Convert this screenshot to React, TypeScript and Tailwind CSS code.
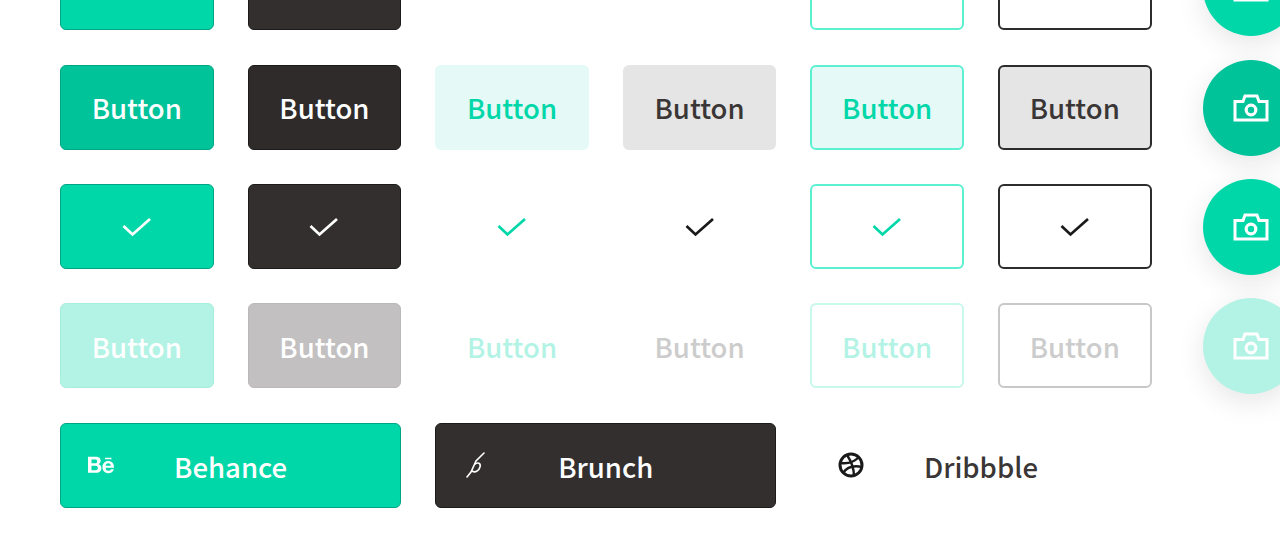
import React from "react";
import { FaBehance } from "react-icons/fa";

const P = "#00d7a9";

function Check({ color }: { color: string }) {
  return (
    <svg width="30" height="20" viewBox="0 0 30 20" fill="none">
      <path d="M1.5 9 L10.5 17.5 L28 2" stroke={color} strokeWidth="2.7" />
    </svg>
  );
}

function Camera() {
  return (
    <svg width="36" height="28" viewBox="0 0 36 28" fill="none" stroke="#ffffff">
      <path d="M2 26 V7.5 H10 L12 2 H24 L26 7.5 H34 V26 Z" strokeWidth="3" />
      <circle cx="18" cy="16" r="4.8" strokeWidth="3.2" />
    </svg>
  );
}

function Brunch() {
  return (
    <svg width="20" height="28" viewBox="0 0 20 28" fill="none" stroke="#ffffff" strokeWidth="1.6" strokeLinecap="round">
      <path d="M1 26 L5 21 L10 10 L18 2" />
      <path d="M9 13 C12 11 15 12 14 16 C13 20 9 22 6 20" />
    </svg>
  );
}

function Dribbble() {
  return (
    <svg width="26" height="26" viewBox="0 0 26 26" fill="none" stroke="#1a1a1a" strokeWidth="3">
      <circle cx="13" cy="13" r="11" />
      <path d="M9 3 C13 9 16 16 16 24" strokeWidth="2.4" />
      <path d="M3 11 C10 12 16 10 21 5" strokeWidth="2.4" />
      <path d="M5 21 C9 15 15 13 24 15" strokeWidth="2.4" />
    </svg>
  );
}

const v = {
  solid: "border bg-[#00d7a9] border-[#00a585] text-white",
  dark: "border bg-[#332f2f] border-[#1c1a1a] text-white",
  ghost: "border bg-white border-transparent text-[#00d7a9]",
  ghostDark: "border bg-white border-transparent text-[#3a3636]",
  outline: "border-2 bg-white border-[#5cf0d2] text-[#00d7a9]",
  outlineDark: "border-2 bg-white border-[#2e2b2b] text-[#3a3636]",
};

function Btn({ className, children }: { className: string; children: React.ReactNode }) {
  return (
    <div className={`flex h-[85px] items-center justify-center rounded-[6px] text-[27.5px] leading-none font-medium ${className}`}>
      {children}
    </div>
  );
}

function Label({ children }: { children: React.ReactNode }) {
  return <span className="pt-[2px]">{children}</span>;
}

function Fab({ className }: { className: string }) {
  return (
    <div className={`flex h-[96px] w-[96px] items-center justify-center rounded-full shadow-[0_8px_28px_rgba(0,0,0,0.1)] ${className}`}>
      <Camera />
    </div>
  );
}

function Wide({ className, icon, label }: { className: string; icon: React.ReactNode; label: string }) {
  return (
    <div className={`col-span-2 grid h-[85px] grid-cols-[1fr_auto_1fr] items-center rounded-[6px] text-[27.5px] leading-none font-medium ${className}`}>
      <div className="flex h-[30px] w-[80px] items-center justify-center">{icon}</div>
      <Label>{label}</Label>
      <span />
    </div>
  );
}

export default function App() {
  return (
    <div className="h-[546px] w-[1280px] overflow-hidden bg-white font-['Noto_Sans_CJK_JP','Noto_Sans',sans-serif]">
      <div className="mt-[-54.7px] flex">
        <div className="ml-[60px] grid grid-cols-[repeat(6,153.6px)] gap-x-[34px] gap-y-[34.4px]">
          <Btn className={v.solid}><Label>Button</Label></Btn>
          <Btn className={v.dark}><Label>Button</Label></Btn>
          <Btn className={v.ghost}><Label>Button</Label></Btn>
          <Btn className={v.ghostDark}><Label>Button</Label></Btn>
          <Btn className={v.outline}><Label>Button</Label></Btn>
          <Btn className={v.outlineDark}><Label>Button</Label></Btn>

          <Btn className="border border-[#00a585] bg-[#00c39a] text-white"><Label>Button</Label></Btn>
          <Btn className="border border-[#1c1a1a] bg-[#2f2b2b] text-white"><Label>Button</Label></Btn>
          <Btn className="border border-transparent bg-[#e5f9f6] text-[#00d7a9]"><Label>Button</Label></Btn>
          <Btn className="border border-transparent bg-[#e5e5e5] text-[#3a3636]"><Label>Button</Label></Btn>
          <Btn className="border-2 border-[#5cf0d2] bg-[#e5f9f6] text-[#00d7a9]"><Label>Button</Label></Btn>
          <Btn className="border-2 border-[#2e2b2b] bg-[#e5e5e5] text-[#3a3636]"><Label>Button</Label></Btn>

          <Btn className={v.solid}><Check color="#ffffff" /></Btn>
          <Btn className={v.dark}><Check color="#ffffff" /></Btn>
          <Btn className={v.ghost}><Check color={P} /></Btn>
          <Btn className={v.ghostDark}><Check color="#1a1a1a" /></Btn>
          <Btn className={v.outline}><Check color={P} /></Btn>
          <Btn className={v.outlineDark}><Check color="#1a1a1a" /></Btn>

          <Btn className="border border-[#a8eedd] bg-[#b3f3e5] text-white"><Label>Button</Label></Btn>
          <Btn className="border border-[#bbb8b8] bg-[#c2c0c0] text-white"><Label>Button</Label></Btn>
          <Btn className="border border-transparent bg-white text-[#b3f3e5]"><Label>Button</Label></Btn>
          <Btn className="border border-transparent bg-white text-[#cccccc]"><Label>Button</Label></Btn>
          <Btn className="border-2 border-[#c8f7ec] bg-white text-[#b3f3e5]"><Label>Button</Label></Btn>
          <Btn className="border-2 border-[#c8c8c8] bg-white text-[#cccccc]"><Label>Button</Label></Btn>

          <Wide className={v.solid} icon={<FaBehance size={26} color="#ffffff" />} label="Behance" />
          <Wide className={v.dark} icon={<Brunch />} label="Brunch" />
          <Wide className={v.ghostDark} icon={<Dribbble />} label="Dribbble" />
        </div>
        <div className="ml-[51px] -mt-[5px] flex flex-col gap-[23.4px]">
          <Fab className="bg-[#00d7a9]" />
          <Fab className="bg-[#00c39a]" />
          <Fab className="bg-[#00d7a9]" />
          <Fab className="bg-[#b3f3e5]" />
        </div>
      </div>
    </div>
  );
}
